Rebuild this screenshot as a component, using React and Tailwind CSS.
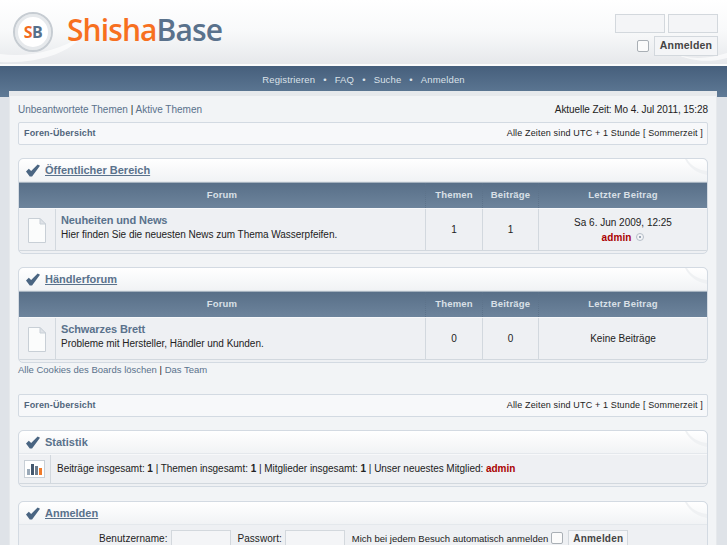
const sans = "font-['Liberation_Sans',Arial,sans-serif]";

function Check() {
  return (
    <svg width="14" height="13" viewBox="0 0 15 13" className="shrink-0">
      <path d="M0 7.5 L3 4.5 L5.5 7 L12.5 0 L15 1.5 L6.5 13 L4 13 Z" fill="#4a6582" />
    </svg>
  );
}

function PageIcon() {
  return (
    <svg width="18" height="25" viewBox="0 0 18 25">
      <path d="M0.5 0.5 H12 L17.5 6 V24.5 H0.5 Z" fill="#fbfcfc" stroke="#c8cfd6" />
      <path d="M12 0.5 V6 H17.5 Z" fill="#dfe3e8" stroke="#c8cfd6" />
    </svg>
  );
}

function Breadcrumb() {
  return (
    <div className="h-[23px] border border-[#d3dae2] bg-[#f7f8fa] rounded-[2px] flex items-center justify-between pl-[5px] pr-[4px] text-[9px] tracking-[0.15px]">
      <span className="font-bold text-[#50657c]">Foren-Übersicht</span>
      <span className="text-[#222]">Alle Zeiten sind UTC + 1 Stunde [ Sommerzeit ]</span>
    </div>
  );
}

function BoxTitle({ children, underline }) {
  return (
    <div className="relative h-[23px] flex items-center gap-[5px] pl-[7px] rounded-t-[5px] bg-gradient-to-b from-white to-[#f1f3f5] border-b border-[#e4e8ec]">
      <Check />
      <span className={`text-[11px] font-bold text-[#5a728c] ${underline ? "underline" : ""}`}>{children}</span>
      <svg width="22" height="16" viewBox="0 0 22 16" className="absolute right-0 top-0">
        <path d="M2 0 C6 7 13 11 22 12 V16 C11 14 4 8 0 0 Z" fill="#eff1f3" />
      </svg>
    </div>
  );
}

function ForumBox({ title, name, desc, themen, beitraege, last }) {
  const th = "h-[25px] flex items-center justify-center text-[9.5px] font-bold tracking-[0.2px] text-[#d9e0e7] border-l border-dotted border-[#5d738b] first:border-l-0";
  const td = "flex items-center justify-center text-[10px] text-[#222] border-l border-[#d2d8de]";
  const cols = "grid grid-cols-[406px_57px_56px_1fr]";
  return (
    <div className="border border-[#d3dae2] rounded-[5px] bg-[#eef0f3] overflow-hidden">
      <BoxTitle underline>{title}</BoxTitle>
      <div className={`${cols} bg-gradient-to-b from-[#586f88] to-[#6d849c] border-t border-[#a5b2bf]`}>
        <div className={th}>Forum</div>
        <div className={th}>Themen</div>
        <div className={th}>Beiträge</div>
        <div className={th}>Letzter Beitrag</div>
      </div>
      <div className={`${cols} h-[43px] border-b border-[#d2d8de] border-t border-t-[#f7f8fa] mb-[2px]`}>
        <div className="flex">
          <div className="w-[37px] flex items-center justify-center border-r border-[#d2d8de] pt-[1px]">
            <PageIcon />
          </div>
          <div className="pl-[5px] flex flex-col justify-center pb-[5px]">
            <div className="text-[11px] tracking-[-0.1px] font-bold text-[#5a728c] leading-[14px]">{name}</div>
            <div className="text-[10px] tracking-[-0.03px] text-[#222] leading-[15px]">{desc}</div>
          </div>
        </div>
        <div className={td}>{themen}</div>
        <div className={td}>{beitraege}</div>
        <div className={`${td} flex-col`}>{last}</div>
      </div>
    </div>
  );
}

export default function App() {
  return (
    <div className={`${sans} w-[727px] h-[545px] overflow-hidden bg-[#dfe3e8] text-[10px] text-[#222]`}>
      <header className="h-[66px] relative flex justify-between bg-gradient-to-b from-white via-[#f8f9fa] to-[#e6e8eb] border-b-2 border-[#fbfcfc]">
        <svg width="727" height="64" viewBox="0 0 727 64" className="absolute left-0 top-0">
          <path d="M0 54 C30 58 60 50 82 36 C70 52 40 64 0 62 Z" fill="#ffffff" opacity="0.65" />
          <path d="M668 50 C685 60 705 60 727 53 V58 C705 64 685 60 668 50 Z" fill="#ffffff" opacity="0.65" />
        </svg>
        <div className="relative flex items-start pl-[13px] pt-[12px]">
          <div className="w-[40px] h-[40px] rounded-full border-2 border-[#c6ccd2] bg-white flex items-center justify-center shadow-[inset_0_0_0_3px_#e6e9ec]">
            <span className="text-[16px] font-bold font-['Open_Sans',sans-serif] tracking-[-0.5px] leading-none">
              <span className="text-[#f26b1d]">S</span>
              <span className="text-[#56708c]">B</span>
            </span>
          </div>
          <div className="ml-[14px] mt-[-3px] text-[30px] leading-[42px] font-semibold font-['Open_Sans',sans-serif] tracking-[-0.9px]">
            <span className="text-[#f7701f]">Shisha</span>
            <span className="text-[#5a728c]">Base</span>
          </div>
        </div>
        <div className="relative pr-[9px] pt-[14px] flex flex-col items-end gap-[3px]">
          <div className="flex gap-[3px]">
            <div className="w-[50px] h-[19px] border border-[#d3d8dd] bg-[#f4f5f7]" />
            <div className="w-[50px] h-[19px] border border-[#d3d8dd] bg-[#f4f5f7]" />
          </div>
          <div className="flex items-center gap-[5px]">
            <div className="w-[12px] h-[12px] rounded-[2px] border border-[#a9afb5] bg-[#fbfbfb]" />
            <div className="w-[64px] h-[20px] border border-[#d3d8dd] bg-[#f4f5f7] flex items-center justify-center text-[10.5px] font-bold tracking-[0.2px] text-[#444]">
              Anmelden
            </div>
          </div>
        </div>
      </header>

      <nav className="h-[31px] bg-gradient-to-b from-[#465f7c] to-[#5f7a96] flex justify-center pt-[7px] text-[9.5px] tracking-[0.15px] text-[#dbe2e9] gap-[8px]">
        <span>Registrieren</span><span>•</span><span>FAQ</span><span>•</span><span>Suche</span><span>•</span><span>Anmelden</span>
      </nav>

      <main className="relative mt-[-6px] ml-[9px] w-[708px] border-t-[5px] border-l border-r border-[#e6e9ec] bg-[#f2f4f6] px-[8px] pt-[4px]">
        <div className="flex justify-between h-[22px] items-center text-[10px] pb-[4px]">
          <span><span className="text-[#5a728c]">Unbeantwortete Themen</span> | <span className="text-[#5a728c]">Aktive Themen</span></span>
          <span className="tracking-[-0.08px]">Aktuelle Zeit: Mo 4. Jul 2011, 15:28</span>
        </div>
        <Breadcrumb />
        <div className="h-[13px]" />
        <ForumBox
          title="Öffentlicher Bereich"
          name="Neuheiten und News"
          desc="Hier finden Sie die neuesten News zum Thema Wasserpfeifen."
          themen="1"
          beitraege="1"
          last={
            <>
              <div className="leading-[15px]">Sa 6. Jun 2009, 12:25</div>
              <div className="leading-[15px] flex items-center gap-[5px]">
                <span className="font-bold text-[#aa0000] tracking-[0.1px]">admin</span>
                <svg width="8" height="8" viewBox="0 0 8 8"><circle cx="4" cy="4" r="3.5" fill="#f4f5f7" stroke="#b5bec7" /><circle cx="4" cy="4" r="1" fill="#7b8da0" /></svg>
              </div>
            </>
          }
        />
        <div className="h-[13px]" />
        <ForumBox
          title="Händlerforum"
          name="Schwarzes Brett"
          desc="Probleme mit Hersteller, Händler und Kunden."
          themen="0"
          beitraege="0"
          last="Keine Beiträge"
        />
        <div className="h-[15px] flex items-center text-[9.5px]">
          <span className="text-[#5a728c]">Alle Cookies des Boards löschen</span>&nbsp;|&nbsp;<span className="text-[#5a728c]">Das Team</span>
        </div>
        <div className="h-[16px]" />
        <Breadcrumb />
        <div className="h-[13px]" />
        <div className="border border-[#d3dae2] rounded-[5px] bg-[#eef0f3] overflow-hidden">
          <BoxTitle>Statistik</BoxTitle>
          <div className="flex h-[30px] border-b border-[#d2d8de] border-t border-t-[#f7f8fa] mb-[2px]">
            <div className="w-[32px] flex items-center justify-center border-r border-[#d2d8de]">
              <div className="w-[21px] h-[18px] border border-[#c8cfd6] bg-white flex items-end justify-center gap-[1px] pb-[2px]">
                <span className="w-[3px] h-[6px] bg-[#9aa9b8]" />
                <span className="w-[3px] h-[11px] bg-[#44586e]" />
                <span className="w-[3px] h-[9px] bg-[#6c7c8c]" />
                <span className="w-[3px] h-[7px] bg-[#f07a2a]" />
              </div>
            </div>
            <div className="pl-[5px] pb-[1px] flex items-center text-[10px] tracking-[-0.04px] whitespace-pre ml-[1px]">
              Beiträge insgesamt: <b>1</b> | Themen insgesamt: <b>1</b> | Mitglieder insgesamt: <b>1</b> | Unser neuestes Mitglied: <b className="text-[#aa0000]">admin</b>
            </div>
          </div>
        </div>
        <div className="h-[14px]" />
        <div className="border border-[#d3dae2] rounded-[5px] bg-[#eef0f3] overflow-hidden">
          <BoxTitle underline>Anmelden</BoxTitle>
          <div className="h-[30px] flex items-start pl-[80px] pt-[5px] text-[10px]">
            <span className="leading-[13px] mt-[2px] tracking-[0.05px]">Benutzername:</span>
            <div className="ml-[4px] w-[60px] h-[20px] border border-[#d3d8dd] bg-[#f4f5f7]" />
            <span className="ml-[6px] leading-[13px] mt-[2px] tracking-[0.05px]">Passwort:</span>
            <div className="ml-[3px] w-[60px] h-[20px] border border-[#d3d8dd] bg-[#f4f5f7]" />
            <span className="ml-[7px] leading-[13px] mt-[2px] text-[9.5px]">Mich bei jedem Besuch automatisch anmelden</span>
            <div className="ml-[3px] mt-[2px] w-[12px] h-[12px] rounded-[2px] border border-[#a9afb5] bg-[#fbfbfb]" />
            <div className="ml-[5px] w-[60px] h-[17px] border border-[#d3d8dd] bg-[#f4f5f7] flex items-center justify-center font-bold tracking-[0.2px] text-[#444]">Anmelden</div>
          </div>
        </div>
      </main>
    </div>
  );
}
